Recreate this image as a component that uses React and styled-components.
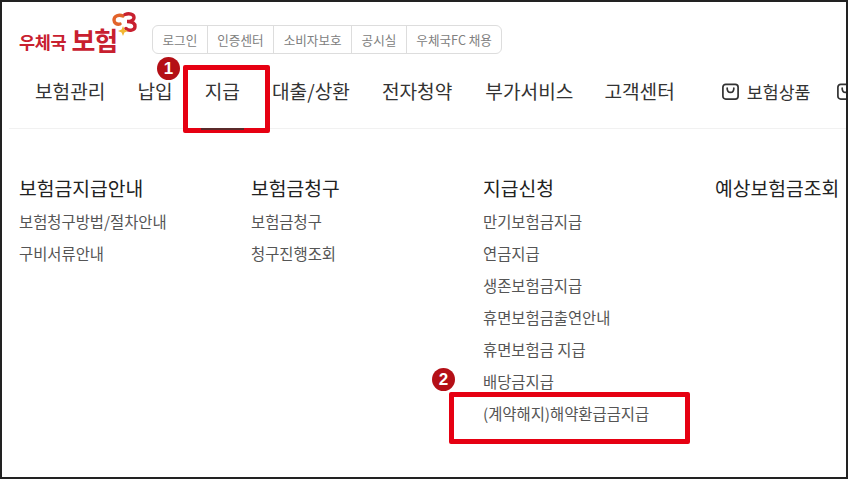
import React from "react";
import styled, { createGlobalStyle } from "styled-components";

const GlobalStyle = createGlobalStyle`
  html, body {
    margin: 0;
    padding: 0;
    background: #fff;
  }
  * {
    box-sizing: border-box;
  }
`;

const Frame = styled.div`
  position: relative;
  width: 848px;
  height: 479px;
  border: 2px solid #222;
  overflow: hidden;
  background: #fff;
  font-family: "Noto Sans CJK KR", "Noto Sans", sans-serif;
`;

const TopRow = styled.div`
  display: flex;
  align-items: flex-start;
  height: 61px;
  padding: 10px 0 0 17px;
`;

const Logo = styled.div`
  display: flex;
  align-items: flex-end;
  width: 133px;
  height: 44px;
  color: #c8202f;
  font-weight: 700;
  white-space: nowrap;
`;

const LogoSmall = styled.span`
  font-size: 17.5px;
  line-height: 24px;
  margin-right: 5px;
  margin-bottom: 2px;
  letter-spacing: -0.3px;
`;

const LogoBig = styled.span`
  font-size: 26px;
  line-height: 32px;
  letter-spacing: -1px;
`;

const LogoMark = styled.svg`
  flex: none;
  width: 26px;
  height: 25px;
  margin: 0 0 auto -6px;
`;

const UtilBar = styled.div`
  display: flex;
  height: 29px;
  margin-top: 13px;
  border: 1px solid #ddd;
  border-radius: 6px;
`;

const UtilItem = styled.div`
  display: flex;
  align-items: center;
  padding: 0 9.5px;
  font-size: 12.6px;
  color: #808080;
  white-space: nowrap;
  & + & {
    border-left: 1px solid #ddd;
  }
`;

const Nav = styled.nav`
  display: flex;
  align-items: center;
  height: 66px;
  margin-left: 7px;
  padding: 0 0 9px 26px;
  border-bottom: 1px solid #f1f1f1;
  font-size: 19.15px;
  color: #333;
  white-space: nowrap;
`;

const NavItem = styled.div`
  position: relative;
  flex: none;
  margin-right: ${({ $gap }) => $gap}px;
`;

const ActiveLine = styled.span`
  position: absolute;
  z-index: 1;
  left: -4px;
  right: -4px;
  top: 51px;
  height: 1.5px;
  background: #5a2a2a;
`;

const Product = styled.div`
  display: flex;
  align-items: center;
  gap: 7px;
  flex: none;
  margin-right: ${({ $gap }) => $gap}px;
  font-size: 17.3px;
`;

const BagIcon = styled.svg`
  width: 19px;
  height: 19px;
  flex: none;
`;

const Menu = styled.div`
  display: grid;
  grid-template-columns: repeat(4, 232px);
  padding: 46px 0 0 17px;
`;

const Column = styled.div`
  display: flex;
  flex-direction: column;
`;

const Heading = styled.div`
  height: 26px;
  margin-bottom: 4px;
  font-size: 19.3px;
  line-height: 26px;
  color: #222;
  white-space: nowrap;
`;

const MenuLink = styled.div`
  height: 32px;
  font-size: 15.4px;
  line-height: 32px;
  color: #555;
  white-space: nowrap;
`;

const Highlight = styled.div`
  position: absolute;
  left: ${({ $x }) => $x}px;
  top: ${({ $y }) => $y}px;
  width: ${({ $w }) => $w}px;
  height: ${({ $h }) => $h}px;
  border: 5px solid #e60012;
  border-radius: 2px;
`;

const Badge = styled.div`
  position: absolute;
  left: ${({ $x }) => $x}px;
  top: ${({ $y }) => $y}px;
  display: flex;
  align-items: center;
  justify-content: center;
  width: 23px;
  height: 23px;
  border-radius: 50%;
  background: #b40f16;
  color: #fff;
  font-family: "Liberation Sans", sans-serif;
  font-size: 17px;
  font-weight: 700;
`;

const columns = [
  { title: "보험금지급안내", links: ["보험청구방법/절차안내", "구비서류안내"] },
  { title: "보험금청구", links: ["보험금청구", "청구진행조회"] },
  {
    title: "지급신청",
    links: [
      "만기보험금지급",
      "연금지급",
      "생존보험금지급",
      "휴면보험금출연안내",
      "휴면보험금 지급",
      "배당금지급",
      "(계약해지)해약환급금지급",
    ],
  },
  { title: "예상보험금조회", links: [] },
];

const utilLinks = ["로그인", "인증센터", "소비자보호", "공시실", "우체국FC 채용"];

const navLinks = [
  ["보험관리", 32],
  ["납입", 32],
  ["지급", 32],
  ["대출/상환", 32],
  ["전자청약", 33],
  ["부가서비스", 31],
  ["고객센터", 46],
];

function Bag() {
  return (
    <BagIcon viewBox="0 0 20 20" fill="none" stroke="#333" strokeWidth="1.8">
      <rect x="2" y="2.5" width="16" height="15.5" rx="3" />
      <path d="M6.5 6.5c0 6 7 6 7 0" strokeLinecap="round" />
    </BagIcon>
  );
}

export default function App() {
  return (
    <>
      <GlobalStyle />
      <Frame>
        <TopRow>
          <Logo>
            <LogoSmall>우체국</LogoSmall>
            <LogoBig>보험</LogoBig>
            <LogoMark viewBox="0 0 26 25" fill="none">
              <path d="M12 4C8 2 3 4 3 8c0 3 3 5 6 4" stroke="#e2632a" strokeWidth="3.4" strokeLinecap="round" />
              <path d="M14 2.5c4-1.5 9-.5 9 3 0 3-4 4-7 4 4 0 8 1 8 5 0 4-6 5-9 2" stroke="#c8202f" strokeWidth="3.4" strokeLinecap="round" />
              <path d="M12 14l1.4 3.6 3.6 1.4-3.6 1.4-1.4 3.6-1.4-3.6L7 19l3.6-1.4z" fill="#f2b632" />
            </LogoMark>
          </Logo>
          <UtilBar>
            {utilLinks.map((label) => (
              <UtilItem key={label}>{label}</UtilItem>
            ))}
          </UtilBar>
        </TopRow>
        <Nav>
          {navLinks.map(([label, gap]) => (
            <NavItem key={label} $gap={gap}>
              {label}
              {label === "지급" && <ActiveLine />}
            </NavItem>
          ))}
          <Product $gap={26}>
            <Bag />
            보험상품
          </Product>
          <Bag />
        </Nav>
        <Menu>
          {columns.map((col) => (
            <Column key={col.title}>
              <Heading>{col.title}</Heading>
              {col.links.map((link) => (
                <MenuLink key={link}>{link}</MenuLink>
              ))}
            </Column>
          ))}
        </Menu>
        <Highlight $x={180.5} $y={63} $w={87} $h={68} />
        <Badge $x={155} $y={55}>1</Badge>
        <Highlight $x={447} $y={390} $w={241} $h={52} />
        <Badge $x={430} $y={366}>2</Badge>
      </Frame>
    </>
  );
}
